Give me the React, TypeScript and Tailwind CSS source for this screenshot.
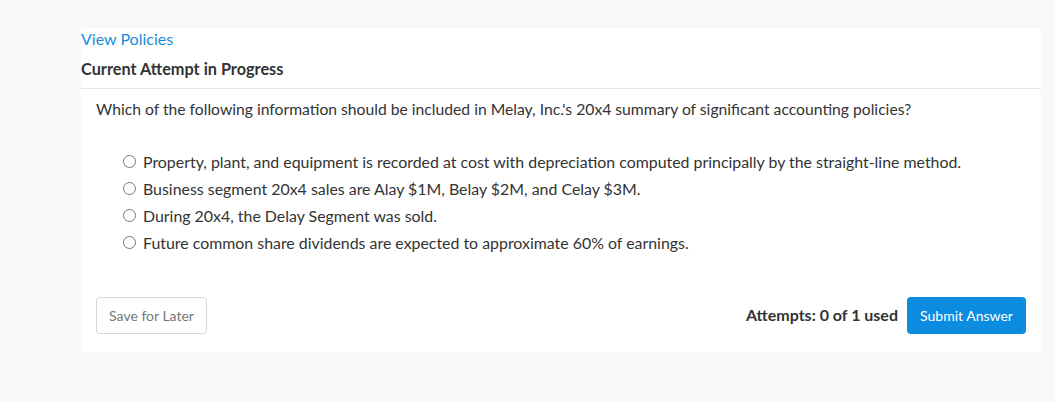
import { useState } from "react";

const options = [
  "Property, plant, and equipment is recorded at cost with depreciation computed principally by the straight-line method.",
  "Business segment 20x4 sales are Alay $1M, Belay $2M, and Celay $3M.",
  "During 20x4, the Delay Segment was sold.",
  "Future common share dividends are expected to approximate 60% of earnings.",
];

export default function App() {
  const [selected, setSelected] = useState<number | null>(null);

  return (
    <div
      className="min-h-screen bg-[#f8f8f8] pt-[28px] text-[#333333]"
      style={{ fontFamily: "Lato, 'Open Sans', sans-serif" }}
    >
      <div className="ml-[81px] w-[960px] bg-white pb-[18px]">
        <a className="block text-[16px] leading-[22px] text-[#1a8ddb] cursor-pointer">
          View Policies
        </a>
        <div className="mt-[8px] text-[16.3px] font-bold leading-[22px]">
          Current Attempt in Progress
        </div>
        <div className="mt-[8px] h-px bg-[#e8e8e8]" />

        <p className="mt-[9px] px-[15px] text-[15.7px] leading-[22px]">
          Which of the following information should be included in Melay, Inc.'s 20x4 summary of significant accounting policies?
        </p>

        <div className="mt-[28px] flex flex-col pl-[42px]">
          {options.map((opt, i) => (
            <label
              key={i}
              className="flex h-[27px] cursor-pointer items-center gap-[7px] text-[15.9px]"
              onClick={() => setSelected(i)}
            >
              <span className="flex h-[13px] w-[13px] shrink-0 items-center justify-center rounded-full border border-[#767676] bg-white">
                {selected === i && <span className="h-[7px] w-[7px] rounded-full bg-[#1a8ddb]" />}
              </span>
              {opt}
            </label>
          ))}
        </div>

        <div className="mt-[41px] flex items-center justify-between px-[15px]">
          <button className="h-[37px] w-[111px] rounded-[4px] border border-[#d6d6d6] bg-white text-[14px] text-[#777777]">
            Save for Later
          </button>
          <div className="flex items-center gap-[9px]">
            <span className="-mt-[2px] text-[16px] font-bold">Attempts: 0 of 1 used</span>
            <button className="h-[37px] w-[119px] rounded-[4px] bg-[#0b8ce0] text-[14px] text-white">
              Submit Answer
            </button>
          </div>
        </div>
      </div>
    </div>
  );
}
